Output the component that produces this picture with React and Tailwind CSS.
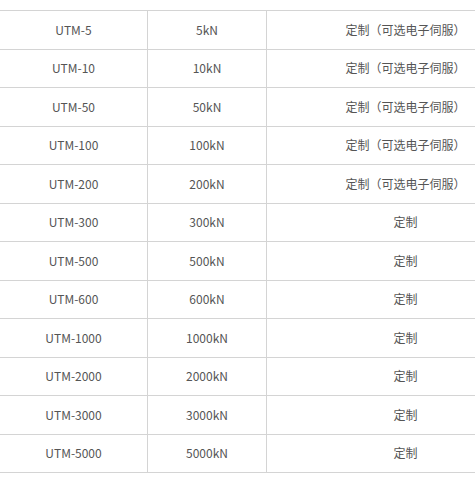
import React from 'react';

const rows = [
  ['UTM-5', '5kN', '定制（可选电子伺服）'],
  ['UTM-10', '10kN', '定制（可选电子伺服）'],
  ['UTM-50', '50kN', '定制（可选电子伺服）'],
  ['UTM-100', '100kN', '定制（可选电子伺服）'],
  ['UTM-200', '200kN', '定制（可选电子伺服）'],
  ['UTM-300', '300kN', '定制'],
  ['UTM-500', '500kN', '定制'],
  ['UTM-600', '600kN', '定制'],
  ['UTM-1000', '1000kN', '定制'],
  ['UTM-2000', '2000kN', '定制'],
  ['UTM-3000', '3000kN', '定制'],
  ['UTM-5000', '5000kN', '定制'],
];

export default function App() {
  return (
    <div className="w-[475px] h-[484px] overflow-hidden bg-white pt-[10px] font-['Noto_Sans_CJK_SC','Noto_Sans',sans-serif] text-[12px] text-[#555]">
      <div className="w-[544px] border-t border-[#d4d4d4]">
        {rows.map(([model, load, note]) => (
          <div
            key={model}
            className="grid grid-cols-[148px_119px_277px] h-[38.5px] border-b border-[#d4d4d4]"
          >
            <div className="flex items-center justify-center border-r border-[#d4d4d4]">{model}</div>
            <div className="flex items-center justify-center border-r border-[#d4d4d4]">{load}</div>
            <div className="flex items-center justify-center">{note}</div>
          </div>
        ))}
      </div>
    </div>
  );
}
